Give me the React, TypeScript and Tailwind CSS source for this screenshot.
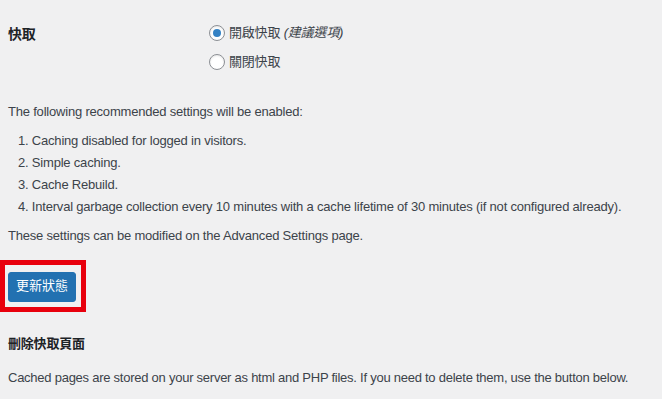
import React from "react";

function Radio({ checked }: { checked?: boolean }) {
  return (
    <span className="inline-flex h-4 w-4 shrink-0 items-center justify-center rounded-full border border-[#8c8f94] bg-white shadow-[inset_0_1px_2px_rgba(0,0,0,0.1)]">
      {checked && <span className="h-2 w-2 rounded-full bg-[#3582c4]" />}
    </span>
  );
}

export default function App() {
  return (
    <div
      className="h-[399px] w-[662px] overflow-hidden bg-[#f0f0f1] pl-2 text-[13px] leading-[1.4] tracking-[-0.2px] text-[#3c434a]"
      style={{ fontFamily: '"Liberation Sans", "Noto Sans CJK TC", sans-serif' }}
    >
      <div className="flex pt-[24px]">
        <div className="w-[201px] pt-[1px] text-[14px] font-bold text-[#1d2327]">快取</div>
        <div className="flex flex-col gap-[11px]">
          <label className="flex items-center gap-[4px]">
            <Radio checked />
            <span>
              開啟快取 <em className="italic">(建議選項)</em>
            </span>
          </label>
          <label className="flex items-center gap-[4px]">
            <Radio />
            <span>關閉快取</span>
          </label>
        </div>
      </div>

      <p className="mt-[32px]">The following recommended settings will be enabled:</p>
      <ol className="mt-[10px] flex flex-col gap-[4px] pl-[10px]">
        <li>1. Caching disabled for logged in visitors.</li>
        <li>2. Simple caching.</li>
        <li>3. Cache Rebuild.</li>
        <li>4. Interval garbage collection every 10 minutes with a cache lifetime of 30 minutes (if not configured already).</li>
      </ol>
      <p className="mt-[11px]">These settings can be modified on the Advanced Settings page.</p>

      <div className="relative mt-[26px] h-[30px]">
        <button className="h-[30px] rounded-[3px] border border-[#2271b1] bg-[#2271b1] px-[7px] text-[13px] tracking-normal text-white">
          更新狀態
        </button>
        <div className="pointer-events-none absolute left-[-8px] top-[-12px] h-[52px] w-[86px] border-[5px] border-[#e8000d]" />
      </div>

      <h3 className="mt-[33px] text-[13px] font-bold text-[#1d2327]">刪除快取頁面</h3>
      <p className="mt-[16px] tracking-[-0.25px]">
        Cached pages are stored on your server as html and PHP files. If you need to delete them, use the button below.
      </p>
    </div>
  );
}
